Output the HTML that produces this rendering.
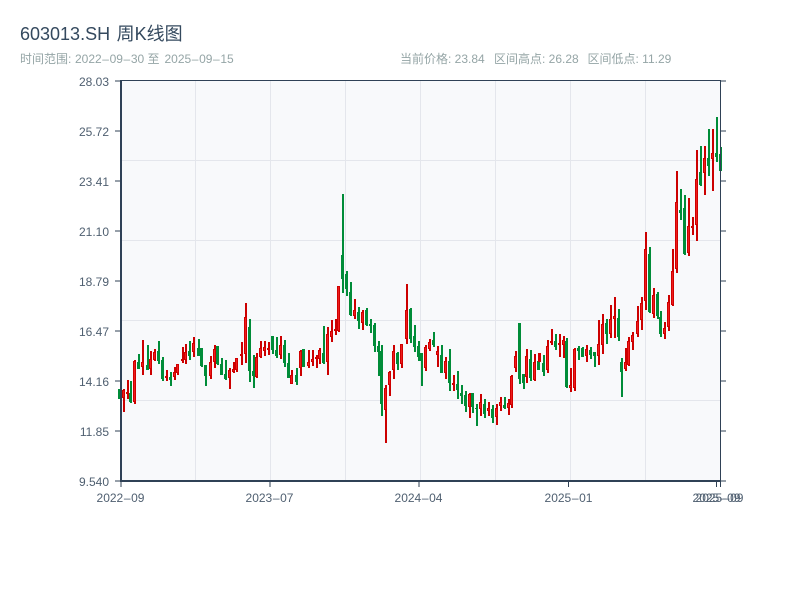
<!DOCTYPE html>
<html>
<head>
<meta charset="utf-8">
<style>
html,body{margin:0;padding:0;background:#fff;width:800px;height:600px;overflow:hidden}
svg{position:absolute;left:0;top:0;display:block}
text{font-family:"Liberation Sans","Noto Sans CJK SC",sans-serif}
</style>
</head>
<body>
<svg width="800" height="600" viewBox="0 0 800 600" xmlns="http://www.w3.org/2000/svg">
<rect x="121" y="81" width="600" height="400" fill="#f8f9fb"/>
<path d="M195.5 81V481M270.5 81V481M345.5 81V481M420.5 81V481M495.5 81V481M570.5 81V481M645.5 81V481M121 160.5H721M121 240.5H721M121 320.5H721M121 400.5H721" stroke="#e4e6ec" stroke-width="1" fill="none"/>

<path fill="none" stroke="#008c38" stroke-width="2" d="M120 389V399M131 381V403M139 354V369M148 345V370M159 341V364M163 357V381M171 372V386M190 341V360M199 339V356M202 348V367M206 365V386M218 346V365M222 358V375M226 360V380M250 319V382M254 355V388M273 336V354M277 337V358M285 340V367M289 353V378M297 368V385M304 349V367M324 326V364M343 194V293M347 271V296M351 282V316M359 307V329M367 308V326M371 319V333M375 323V352M379 341V376M382 345V416M398 352V370M411 308V343M415 325V352M419 341V361M422 353V386M434 332V347M442 345V373M450 349V391M458 371V399M462 385V404M466 391V412M473 393V413M477 404V426M485 399V418M493 405V423M505 397V409M520 323V384M524 374V389M531 350V381M539 361V370M544 355V376M556 334V350M567 338V388M579 346V360M583 347V357M591 347V359M595 352V367M607 319V344M619 309V341M622 358V397M650 247V313M658 292V319M661 311V337M681 189V220M685 195V255M701 146V186M709 129V176M717 117V162M721 147V171"/>
<path transform="translate(-0.5,0)" fill="none" stroke="#008c38" stroke-width="3" d="M120 389V399M131 393V402M139 362V369M148 365V370M159 351V361M163 360V379M171 377V380M190 351V356M199 348V356M202 348V366M206 365V376M218 346V364M222 364V375M226 374V379M250 327V371M254 371V376M273 336V350M277 350V356M285 345V363M289 363V378M297 375V382M304 349V367M324 353V363M343 255V279M347 274V289M351 292V315M359 312V321M367 310V325M371 324V326M375 325V346M379 346V352M382 351V404M398 353V364M411 309V339M415 336V347M419 346V357M422 353V361M434 340V345M442 355V373M450 361V383M458 384V390M462 393V396M466 395V406M473 393V407M477 408V409M485 404V414M493 409V418M505 405V408M520 323V379M524 374V383M531 359V378M539 361V370M544 363V372M556 341V347M567 341V387M579 348V351M583 348V357M591 350V355M595 352V356M607 323V334M619 318V337M622 362V372M650 254V312M658 294V316M661 317V334M681 210V213M685 208V254M701 172V185M709 158V166M717 153V157M721 154V171"/>

<path fill="none" stroke="#cc0000" stroke-width="2" d="M124 389V412M128 380V399M135 360V404M143 340V375M151 351V375M155 349V361M167 370V381M175 367V380M178 364V375M183 347V363M186 344V364M194 337V357M211 356V379M215 345V368M230 368V389M234 362V373M237 358V372M242 342V365M246 303V363M257 353V378M261 341V358M265 341V356M269 342V355M281 336V359M292 370V384M301 350V376M309 350V368M313 350V366M317 355V368M320 348V364M328 327V375M332 320V342M336 319V335M339 286V332M355 299V319M363 310V330M386 385V443M390 371V396M394 345V379M402 344V368M407 284V344M426 345V371M430 339V351M438 346V367M446 357V379M454 375V391M470 393V418M481 394V416M489 402V416M497 404V425M501 397V411M509 399V415M512 375V408M516 351V372M527 349V383M535 354V381M540 353V362M548 340V373M552 329V345M560 334V357M564 336V358M571 368V392M575 348V391M587 345V362M599 320V365M603 314V354M611 305V338M615 297V338M626 348V371M629 337V366M633 332V350M638 306V337M642 297V330M646 232V310M654 288V318M665 322V339M669 295V331M673 249V306M677 171V273M689 198V256M693 217V235M697 150V241M705 146V195M713 129V191"/>
<path transform="translate(-0.5,0)" fill="none" stroke="#d00000" stroke-width="3" d="M124 390V398M128 392V394M135 361V402M143 362V367M151 359V369M155 352V360M167 376V378M175 372V377M178 364V373M183 359V361M186 352V360M194 343V352M211 362V376M215 349V362M230 370V378M234 369V372M237 358V370M242 354V356M246 317V354M257 357V377M261 348V357M265 347V351M269 348V350M281 345V355M292 375V384M301 351V368M309 362V366M313 359V362M317 357V359M320 350V359M328 334V362M332 331V337M336 329V331M339 286V331M355 310V316M363 312V323M386 388V410M390 372V385M394 351V370M402 344V364M407 310V339M426 347V368M430 342V349M438 351V355M446 361V373M454 383V385M470 394V407M481 402V409M489 408V411M497 408V417M501 402V406M509 403V408M512 376V405M516 356V368M527 356V377M535 362V380M540 353V362M548 346V370M552 341V343M560 343V345M564 340V345M571 385V388M575 349V388M587 349V356M599 344V356M603 324V345M611 319V334M615 316V319M626 362V369M629 341V365M633 335V342M638 321V334M642 303V320M646 249V301M654 295V314M665 328V334M669 302V327M673 271V305M677 202V269M689 226V253M693 226V228M697 179V225M705 158V173M713 153V159"/>
<path transform="translate(-0.5,0)" fill="none" stroke="#ee1c1c" stroke-width="1" d="M124 391V397M128 393V393M135 362V401M143 363V366M151 360V368M155 353V359M167 377V377M175 373V376M178 365V372M183 360V360M186 353V359M194 344V351M211 363V375M215 350V361M230 371V377M234 370V371M237 359V369M246 318V353M257 358V376M261 349V356M265 348V350M281 346V354M292 376V383M301 352V367M309 363V365M313 360V361M320 351V358M328 335V361M332 332V336M339 287V330M355 311V315M363 313V322M386 389V409M390 373V384M394 352V369M402 345V363M407 311V338M426 348V367M430 343V348M438 352V354M446 362V372M470 395V406M481 403V408M489 409V410M497 409V416M501 403V405M509 404V407M512 377V404M516 357V367M527 357V376M535 363V379M548 347V369M564 341V344M571 386V387M575 350V387M587 350V355M599 345V355M603 325V344M611 320V333M615 317V318M626 363V368M629 342V364M633 336V341M638 322V333M642 304V319M646 250V300M654 296V313M665 329V333M669 303V326M673 272V304M677 203V268M689 227V252M697 180V224M705 159V172M713 154V158"/>

<g fill="#2f4156">
<rect x="120" y="81" width="2" height="401"/>
<rect x="120" y="480" width="601" height="2"/>
<rect x="120" y="80" width="601" height="1"/>
<rect x="720" y="80" width="1" height="401"/>
<rect x="115" y="80.5" width="5" height="1"/>
<rect x="115" y="130.5" width="5" height="1"/>
<rect x="115" y="180.5" width="5" height="1"/>
<rect x="115" y="230.5" width="5" height="1"/>
<rect x="115" y="280.5" width="5" height="1"/>
<rect x="115" y="330.5" width="5" height="1"/>
<rect x="115" y="380.5" width="5" height="1"/>
<rect x="115" y="430.5" width="5" height="1"/>
<rect x="115" y="480.5" width="5" height="1"/>
<rect x="721" y="80.5" width="5" height="1"/>
<rect x="721" y="130.5" width="5" height="1"/>
<rect x="721" y="180.5" width="5" height="1"/>
<rect x="721" y="230.5" width="5" height="1"/>
<rect x="721" y="280.5" width="5" height="1"/>
<rect x="721" y="330.5" width="5" height="1"/>
<rect x="721" y="380.5" width="5" height="1"/>
<rect x="721" y="430.5" width="5" height="1"/>
<rect x="721" y="480.5" width="5" height="1"/>
<rect x="120.5" y="482" width="1" height="5"/>
<rect x="269.5" y="482" width="1" height="5"/>
<rect x="418.5" y="482" width="1" height="5"/>
<rect x="568" y="482" width="1" height="5"/>
<rect x="716" y="482" width="1" height="5"/>
<rect x="720" y="482" width="1" height="5"/>
</g>

<text x="20" y="40" font-size="18" fill="#34495e">603013.SH <tspan dx="1.5">周K线图</tspan></text>
<text y="63" font-size="12" fill="#95a5a6"><tspan x="20">时间范围: </tspan><tspan x="75">2022</tspan><tspan dx="0.6">–</tspan><tspan dx="0.6">09</tspan><tspan dx="0.6">–</tspan><tspan dx="0.6">30 至 </tspan><tspan x="164.5">2025</tspan><tspan dx="0.6">–</tspan><tspan dx="0.6">09</tspan><tspan dx="0.6">–</tspan><tspan dx="0.6">15</tspan></text>
<text x="400" y="63" font-size="12" fill="#95a5a6">当前价格: 23.84</text>
<text x="494" y="63" font-size="12" fill="#95a5a6">区间高点: 26.28</text>
<text x="587.5" y="63" font-size="12" fill="#95a5a6">区间低点: 11.29</text>

<g font-size="12" fill="#4f5f70" text-anchor="end">
<text x="109" y="86">28.03</text>
<text x="109" y="136">25.72</text>
<text x="109" y="186">23.41</text>
<text x="109" y="236">21.10</text>
<text x="109" y="286">18.79</text>
<text x="109" y="336">16.47</text>
<text x="109" y="386">14.16</text>
<text x="109" y="436">11.85</text>
<text x="109" y="486">9.540</text>
</g>
<g font-size="12" fill="#4f5f70" text-anchor="middle">
<text x="120.5" y="502">2022<tspan dx="0.6">–</tspan><tspan dx="0.6">09</tspan></text>
<text x="269.5" y="502">2023<tspan dx="0.6">–</tspan><tspan dx="0.6">07</tspan></text>
<text x="418.5" y="502">2024<tspan dx="0.6">–</tspan><tspan dx="0.6">04</tspan></text>
<text x="568.5" y="502">2025<tspan dx="0.6">–</tspan><tspan dx="0.6">01</tspan></text>
<text x="716.5" y="502">2025<tspan dx="0.6">–</tspan><tspan dx="0.6">09</tspan></text>
<text x="719.5" y="502">2025<tspan dx="0.6">–</tspan><tspan dx="0.6">09</tspan></text>
</g>
</svg>
</body>
</html>
